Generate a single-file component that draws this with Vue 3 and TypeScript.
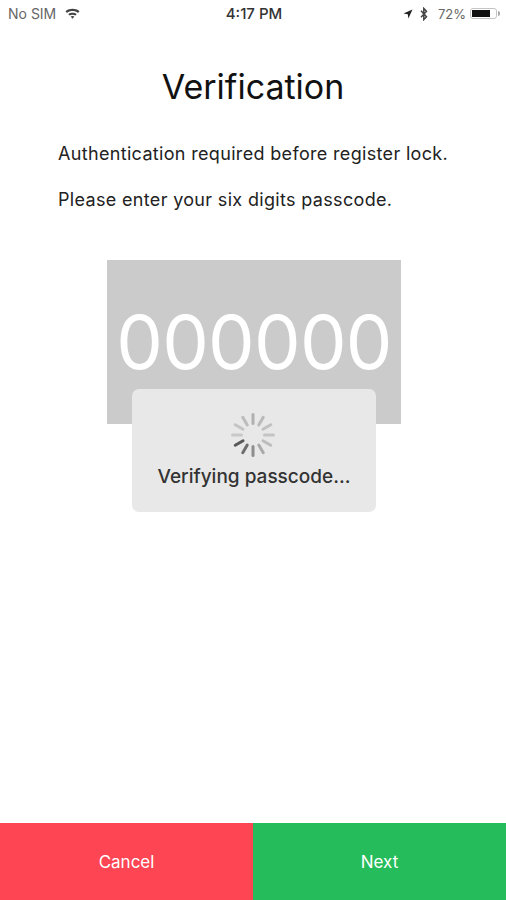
<script setup lang="ts">
const spokes = Array.from({ length: 12 }, (_, i) => i);
const shades = ['#b0b0b0','#bababa','#c0c0c0','#c4c4c4','#bcbcbc','#aaaaaa','#8e8e8e','#6e6e6e','#585858','#c8c8c8','#c4c4c4','#bcbcbc'];
</script>

<template>
  <div class="screen">
    <header class="status">
      <div class="side">
        <span class="carrier">No SIM</span>
        <svg width="15" height="11" viewBox="0 0 15 11" class="wifi">
          <path d="M0.5 3.2C4.5 0 10.5 0 14.5 3.2L13 4.9C9.8 2.4 5.2 2.4 2 4.9Z" fill="#444" />
          <path d="M3.2 6C5.6 4.2 9.4 4.2 11.8 6L10.4 7.6C8.8 6.5 6.2 6.5 4.6 7.6Z" fill="#444" />
          <path d="M5.6 8.6C6.7 7.9 8.3 7.9 9.4 8.6L7.5 10.8Z" fill="#444" />
        </svg>
      </div>
      <div class="time">4:17 PM</div>
      <div class="side right">
        <svg class="arrow" width="10" height="10" viewBox="0 0 10 10"><path d="M9.5 0.5L0.5 4.6L4.8 5.2L5.4 9.5Z" fill="#222" /></svg>
        <svg class="bt" width="8" height="14" viewBox="0 0 7 14"><path d="M0.5 3.8L6 9.8L3.3 12.6V1.4L6 4.2L0.5 10.2" fill="none" stroke="#444" stroke-width="1.5" /></svg>
        <span>72%</span>
        <div class="battery"><div class="level"></div></div>
        <div class="nub"></div>
      </div>
    </header>

    <main class="content">
      <h1>Verification</h1>
      <p class="line first">Authentication required before register lock.</p>
      <p class="line second">Please enter your six digits passcode.</p>
      <div class="code-wrap">
        <div class="code">000000</div>
        <div class="hud">
          <svg class="spinner" width="44" height="44" viewBox="-22 -22 44 44">
            <line v-for="i in spokes" :key="i" x1="0" y1="-11.5" x2="0" y2="-20.5" :stroke="shades[i]" stroke-width="3" stroke-linecap="round" :transform="`rotate(${i * 30})`" />
          </svg>
          <div class="hud-text">Verifying passcode...</div>
        </div>
      </div>
    </main>

    <footer class="actions">
      <button class="btn cancel">Cancel</button>
      <button class="btn next">Next</button>
    </footer>
  </div>
</template>

<style>
html, body { margin: 0; background: #fff; }
</style>

<style scoped>
.screen {
  width: 506px;
  height: 900px;
  display: flex;
  flex-direction: column;
  background: #fff;
  font-family: Inter, "Liberation Sans", sans-serif;
  overflow: hidden;
}
.status {
  height: 29px;
  display: grid;
  grid-template-columns: 1fr auto 1fr;
  align-items: center;
  padding: 0 6px 2px 8px;
  box-sizing: border-box;
  font-size: 13px;
  color: #666;
}
.side { display: flex; align-items: center; gap: 9px; }
.carrier { font-size: 14px; }
.side.right { justify-content: flex-end; gap: 5px; }
.arrow { margin-right: 2px; }
.bt { margin-right: 5px; }
.time { font-weight: 500; font-size: 15px; color: #333; }
.battery {
  width: 27px;
  height: 11px;
  border: 1px solid #c4c4c4;
  border-radius: 3px;
  box-sizing: border-box;
  padding: 1px;
  margin-left: -1px;
}
.level { width: 78%; height: 100%; background: #111; }
.nub { width: 2px; height: 5px; background: #aaa; border-radius: 0 2px 2px 0; margin-left: -4px; }
.content { flex: 1; display: flex; flex-direction: column; }
h1 {
  margin: 38px 0 0;
  text-align: center;
  font-size: 34px;
  line-height: 40px;
  font-weight: 400;
  color: #111;
}
.line { margin: 0 0 0 58px; font-size: 18px; line-height: 22px; letter-spacing: 0.33px; color: #222; }
.first { margin-top: 36px; }
.second { margin-top: 24px; }
.code-wrap { position: relative; width: 294px; margin: 49px 0 0 107px; }
.code {
  height: 164px;
  background: #cbcbcb;
  color: #fff;
  font-size: 74px;
  font-weight: 400;
  line-height: 164px;
  letter-spacing: -0.8px;
  text-align: center;
}
.hud {
  position: absolute;
  left: 25px;
  top: 129px;
  width: 244px;
  height: 123px;
  background: #e8e8e8;
  border-radius: 7px;
  display: flex;
  flex-direction: column;
  align-items: center;
}
.spinner { margin-top: 24px; margin-left: -2px; }
.hud-text { margin-top: 9px; font-size: 19px; line-height: 22px; font-weight: 500; color: #333; }
.actions { height: 77px; display: flex; }
.btn {
  flex: 1;
  border: 0;
  padding: 0;
  color: #fff;
  font: 400 17px Inter, "Liberation Sans", sans-serif;
}
.cancel { background: #fd4553; }
.next { background: #25bd5b; }
</style>
